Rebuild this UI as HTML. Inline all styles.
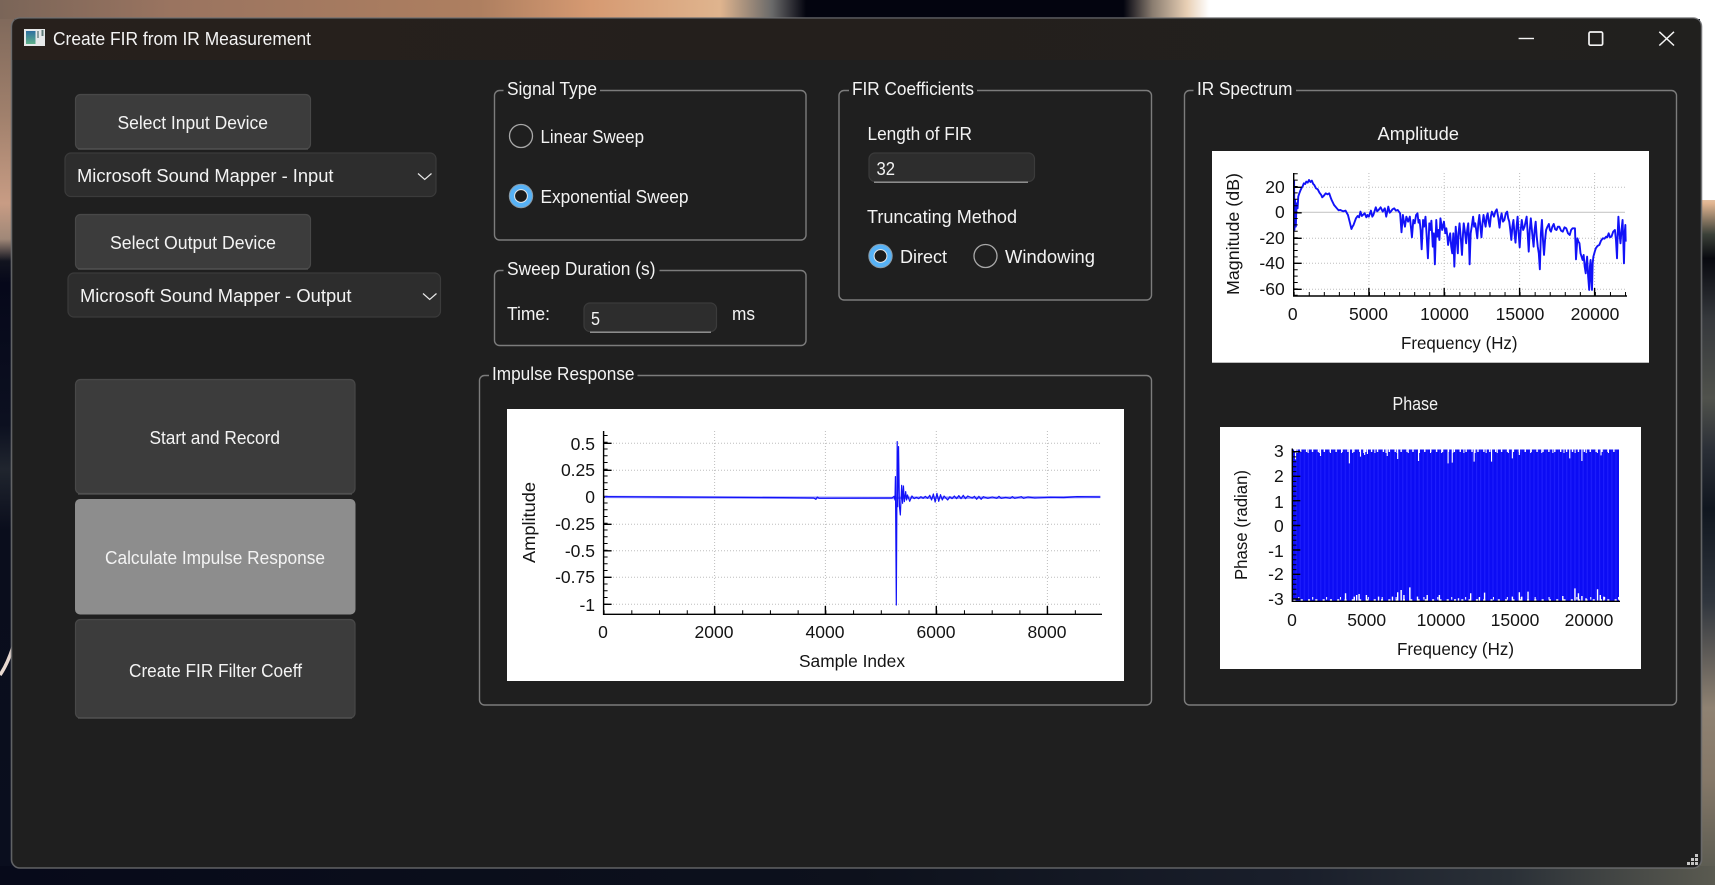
<!DOCTYPE html>
<html lang="en">
<head>
<meta charset="utf-8">
<title>Create FIR from IR Measurement</title>
<style>
html,body{margin:0;padding:0;background:#000;width:1715px;height:885px;overflow:hidden}
svg{display:block}
text{font-family:"Liberation Sans",sans-serif;font-size:18px;fill:#f3f3f3}
.k text,text.k{fill:#141414;font-size:17.5px}
.e text{text-anchor:end}
.m text{text-anchor:middle}
.btn{fill:#3c3c3c;stroke:#484848;stroke-width:1.2}
.cmb{fill:#2d2d2d;stroke:#3b3b3b;stroke-width:1.2}
.grp{fill:none;stroke:#7c7c7c;stroke-width:1.4}
.gap{fill:#1f1f1f}
.grid{stroke:#bdbdbd;stroke-width:1;stroke-dasharray:1 2;fill:none}
.ax{stroke:#000;stroke-width:1.4;fill:none}
.blue{fill:none;stroke:#1212f8;stroke-linejoin:round;vector-effect:non-scaling-stroke}
</style>
</head>
<body>
<svg xmlns="http://www.w3.org/2000/svg" width="1715" height="885" viewBox="0 0 1715 885">
<defs>
<linearGradient id="gt" x1="0" x2="1" y1="0" y2="0">
<stop offset="0" stop-color="#7a6558"/><stop offset=".1" stop-color="#9a7460"/><stop offset=".28" stop-color="#ae7f60"/><stop offset=".345" stop-color="#d69a72"/><stop offset=".42" stop-color="#dfb48e"/><stop offset=".45" stop-color="#6a6a6a"/><stop offset=".47" stop-color="#03040f"/><stop offset=".655" stop-color="#03040f"/><stop offset=".672" stop-color="#8a7d70"/><stop offset=".692" stop-color="#e8cfb4"/><stop offset=".705" stop-color="#ffffff"/><stop offset="1" stop-color="#ffffff"/>
</linearGradient>
<linearGradient id="gl" x1="0" x2="0" y1="0" y2="1">
<stop offset="0" stop-color="#7a6558"/><stop offset=".13" stop-color="#a0806c"/><stop offset=".23" stop-color="#c89c84"/><stop offset=".27" stop-color="#a08878"/><stop offset=".295" stop-color="#12141f"/><stop offset=".32" stop-color="#06081a"/><stop offset=".48" stop-color="#0c1020"/><stop offset=".53" stop-color="#20252e"/><stop offset=".6" stop-color="#0a0d1c"/><stop offset="1" stop-color="#0a0e1e"/>
</linearGradient>
<linearGradient id="gr" x1="0" x2="0" y1="0" y2="1">
<stop offset="0" stop-color="#ffffff"/><stop offset=".2" stop-color="#ffffff"/><stop offset=".23" stop-color="#e0b490"/><stop offset=".265" stop-color="#3a4038"/><stop offset=".292" stop-color="#08090f"/><stop offset=".36" stop-color="#35383c"/><stop offset=".45" stop-color="#50524c"/><stop offset=".51" stop-color="#2a2e36"/><stop offset=".575" stop-color="#10161f"/><stop offset=".68" stop-color="#30363e"/><stop offset=".8" stop-color="#8f8272"/><stop offset=".88" stop-color="#857868"/><stop offset="1" stop-color="#55574e"/>
</linearGradient>
<linearGradient id="gb" x1="0" x2="1" y1="0" y2="0">
<stop offset="0" stop-color="#070a1a"/><stop offset=".5" stop-color="#0d111c"/><stop offset=".76" stop-color="#1a1f2b"/><stop offset=".88" stop-color="#2a3037"/><stop offset="1" stop-color="#5a5a50"/>
</linearGradient>
<linearGradient id="gtb" x1="0" x2="1" y1="0" y2="0">
<stop offset="0" stop-color="#27201c"/><stop offset=".45" stop-color="#241f1c"/><stop offset="1" stop-color="#21201e"/>
</linearGradient>
<linearGradient id="gic" x1="0" x2="0" y1="0" y2="1">
<stop offset="0" stop-color="#2f6fa0"/><stop offset="1" stop-color="#5fb08a"/>
</linearGradient>
<pattern id="ps" width="4.1" height="10" patternUnits="userSpaceOnUse">
<rect width="4.1" height="10" fill="#0c0cf4"/><rect x="0" width="1.1" height="10" fill="#1e1efc"/>
</pattern>
</defs>

<!-- wallpaper -->
<rect x="0" y="0" width="1715" height="885" fill="#0a0e1e"/>
<rect x="0" y="0" width="14" height="885" fill="url(#gl)"/>
<rect x="1700" y="0" width="15" height="885" fill="url(#gr)"/>
<rect x="0" y="866" width="1715" height="19" fill="url(#gb)"/>
<rect x="0" y="0" width="1715" height="19" fill="url(#gt)"/>
<rect x="1700" y="0" width="15" height="200" fill="#fff"/>
<path d="M0 675 Q7 665 13 647" stroke="#e8d8d0" stroke-width="3.5" fill="none"/>

<!-- window -->
<rect x="11.5" y="18" width="1690" height="850" rx="8.5" fill="#1f1f1f" stroke="#6e7072" stroke-width="1.6" stroke-opacity=".85"/>
<path d="M12.3 60 V27 Q12.3 18.8 20.5 18.8 H1692.5 Q1700.7 18.8 1700.7 27 V60 Z" fill="url(#gtb)"/>

<!-- title bar -->
<rect x="24" y="29" width="21" height="17" fill="#e6e9ea"/>
<rect x="26" y="31" width="9.5" height="13" fill="url(#gic)"/>
<rect x="37" y="31" width="2" height="7" fill="#8ea0a0"/>
<rect x="41.5" y="30" width="2" height="6" fill="#5f7a78"/>
<text x="53" y="45" textLength="258" lengthAdjust="spacingAndGlyphs">Create FIR from IR Measurement</text>
<path d="M1518.6 38.5 H1534" stroke="#f4f4f4" stroke-width="1.4"/>
<rect x="1589" y="32" width="13.6" height="13.2" rx="1.5" fill="none" stroke="#f4f4f4" stroke-width="1.7"/>
<path d="M1659.3 31.8 L1674 45.5 M1674 31.8 L1659.3 45.5" stroke="#f4f4f4" stroke-width="1.5" fill="none"/>

<!-- left column -->
<rect class="btn" x="75.5" y="94.5" width="235" height="54.5" rx="5"/>
<path d="M78 149 H308" stroke="#555" stroke-width="1.2"/>
<text x="117.5" y="129" textLength="150.5" lengthAdjust="spacingAndGlyphs">Select Input Device</text>
<rect class="cmb" x="65" y="153" width="371" height="43.5" rx="6"/>
<text x="77" y="182" textLength="256.5" lengthAdjust="spacingAndGlyphs">Microsoft Sound Mapper - Input</text>
<path d="M418 173.5 L424.7 179.5 L431.5 173.5" stroke="#e8e8e8" stroke-width="1.2" fill="none"/>

<rect class="btn" x="75.5" y="214.5" width="235" height="54.5" rx="5"/>
<path d="M78 269 H308" stroke="#555" stroke-width="1.2"/>
<text x="110" y="249" textLength="166" lengthAdjust="spacingAndGlyphs">Select Output Device</text>
<rect class="cmb" x="68" y="273" width="372.5" height="44" rx="6"/>
<text x="80" y="302" textLength="271.5" lengthAdjust="spacingAndGlyphs">Microsoft Sound Mapper - Output</text>
<path d="M423 293.5 L429.7 299.5 L436.5 293.5" stroke="#e8e8e8" stroke-width="1.2" fill="none"/>

<rect class="btn" x="75.5" y="379.5" width="279.5" height="114" rx="5"/>
<path d="M78 494 H352" stroke="#555" stroke-width="1.2"/>
<text x="149.5" y="444" textLength="130.5" lengthAdjust="spacingAndGlyphs">Start and Record</text>
<rect x="75" y="499" width="280.5" height="115.5" rx="5" fill="#8d8d8d"/>
<text x="105" y="564" textLength="220" lengthAdjust="spacingAndGlyphs">Calculate Impulse Response</text>
<rect class="btn" x="75.5" y="619.5" width="279.5" height="98.5" rx="5"/>
<path d="M78 718 H352" stroke="#555" stroke-width="1.2"/>
<text x="129" y="677" textLength="173" lengthAdjust="spacingAndGlyphs">Create FIR Filter Coeff</text>

<!-- Signal Type -->
<rect class="grp" x="494.5" y="90.5" width="311.5" height="149.5" rx="5"/>
<rect class="gap" x="503.5" y="84" width="96.5" height="12"/>
<text x="507" y="95" textLength="90" lengthAdjust="spacingAndGlyphs">Signal Type</text>
<circle cx="521" cy="136" r="11.5" fill="#1f1f1f" stroke="#a8a8a8" stroke-width="1.3"/>
<text x="540.5" y="143" textLength="103.5" lengthAdjust="spacingAndGlyphs">Linear Sweep</text>
<circle cx="521" cy="196" r="11.7" fill="#57b2f6" stroke="#8a9aa6" stroke-width="1"/>
<circle cx="521" cy="196" r="6.4" fill="#1c1c1c" stroke="#e8e8e8" stroke-width="1"/>
<text x="540.5" y="203" textLength="148" lengthAdjust="spacingAndGlyphs">Exponential Sweep</text>

<!-- Sweep Duration -->
<rect class="grp" x="494.5" y="270.5" width="311.5" height="75" rx="5"/>
<rect class="gap" x="503.5" y="264" width="156" height="12"/>
<text x="507" y="275" textLength="148.5" lengthAdjust="spacingAndGlyphs">Sweep Duration (s)</text>
<text x="507" y="320" textLength="43" lengthAdjust="spacingAndGlyphs">Time:</text>
<rect class="cmb" x="584" y="303" width="132.5" height="28.5" rx="6"/>
<path d="M590 332.3 H711" stroke="#8c8c8c" stroke-width="1.5"/>
<text x="591" y="325" textLength="9" lengthAdjust="spacingAndGlyphs">5</text>
<text x="732" y="320" textLength="23" lengthAdjust="spacingAndGlyphs">ms</text>

<!-- FIR Coefficients -->
<rect class="grp" x="839" y="90.5" width="312.5" height="209.5" rx="5"/>
<rect class="gap" x="849" y="84" width="128" height="12"/>
<text x="852" y="95" textLength="122" lengthAdjust="spacingAndGlyphs">FIR Coefficients</text>
<text x="867.5" y="140" textLength="104.5" lengthAdjust="spacingAndGlyphs">Length of FIR</text>
<rect class="cmb" x="869" y="153" width="165.5" height="28.5" rx="6"/>
<path d="M874 182.3 H1028" stroke="#8c8c8c" stroke-width="1.5"/>
<text x="876.5" y="175" textLength="18.5" lengthAdjust="spacingAndGlyphs">32</text>
<text x="867" y="223" textLength="150" lengthAdjust="spacingAndGlyphs">Truncating Method</text>
<circle cx="880.5" cy="256" r="11.7" fill="#57b2f6" stroke="#8a9aa6" stroke-width="1"/>
<circle cx="880.5" cy="256" r="6.4" fill="#1c1c1c" stroke="#e8e8e8" stroke-width="1"/>
<text x="900" y="263" textLength="47" lengthAdjust="spacingAndGlyphs">Direct</text>
<circle cx="985.5" cy="256" r="11.5" fill="#1f1f1f" stroke="#a8a8a8" stroke-width="1.3"/>
<text x="1005" y="263" textLength="90" lengthAdjust="spacingAndGlyphs">Windowing</text>

<!-- Impulse Response -->
<rect class="grp" x="479.5" y="375.5" width="672" height="329.5" rx="5"/>
<rect class="gap" x="489" y="369" width="148.5" height="12"/>
<text x="492" y="380" textLength="142.5" lengthAdjust="spacingAndGlyphs">Impulse Response</text>
<rect x="507" y="409" width="617" height="272" fill="#fff"/>
<path class="grid" d="M604 443.3H1100M604 470.3H1100M604 524.3H1100M604 550.8H1100M604 577.3H1100M604 604.3H1100M714.6 431V614M825.4 431V614M936.3 431V614M1047.4 431V614"/>
<line x1="605.6" y1="604.8" x2="605.6" y2="431" stroke="#000" stroke-width="4" stroke-dasharray="1 5.75"/>
<line x1="603.6" y1="612.3" x2="1102" y2="612.3" stroke="#000" stroke-width="4" stroke-dasharray="1 26.72"/>
<path class="ax" d="M603.6 431V614.3H1102"/>
<path class="ax" d="M603.6 443.3h8M603.6 470.3h8M603.6 497.3h8M603.6 524.3h8M603.6 550.8h8M603.6 577.3h8M603.6 604.3h8M714.6 614v-8M825.4 614v-8M936.3 614v-8M1047.4 614v-8"/>
<g transform="translate(470,360) scale(.4464,.3333)">
<path d="M302 411 L950 414 L1000 413 L1200 413 L1412 411" fill="none" stroke="#8a8aff" stroke-width="2.4" vector-effect="non-scaling-stroke"/>
<path class="blue" stroke-width="1.2" d="M302 410 L440 411 L700 413 L770 414 L775 418 L778 411 L782 415 L945 414 L950 409 L952 420 L953 350 L955 735 L957 245 L958 440 L960 260 L962 440 L964 465 L967 376 L969 430 L971 378 L973 425 L976 395 L978 420 L980 405 L985 424 L990 408 L995 416 L1000 412 L1005 416 L1010 410 L1015 415 L1020 409 L1025 415 L1030 406 L1034 420 L1038 402 L1042 426 L1046 400 L1050 424 L1054 404 L1058 420 L1062 408 L1070 420 L1075 410 L1080 416 L1085 408 L1090 416 L1095 407 L1100 416 L1105 406 L1110 416 L1115 408 L1125 414 L1130 409 L1135 418 L1140 409 L1145 418 L1150 410 L1160 415 L1170 411 L1180 415 L1185 409 L1190 415 L1200 412 L1210 415 L1215 410 L1220 415 L1235 410 L1240 415 L1250 411 L1265 414 L1300 412 L1330 413 L1360 410 L1412 411"/>
</g>
<g class="k e"><text x="595" y="450">0.5</text><text x="595" y="476">0.25</text><text x="595" y="503">0</text><text x="595" y="530">-0.25</text><text x="595" y="557">-0.5</text><text x="595" y="583">-0.75</text><text x="595" y="611">-1</text></g>
<g class="k m"><text x="603" y="638">0</text><text x="714" y="638">2000</text><text x="825" y="638">4000</text><text x="936" y="638">6000</text><text x="1047" y="638">8000</text></g>
<text class="k" x="799" y="667" textLength="106" lengthAdjust="spacingAndGlyphs">Sample Index</text>
<text class="k" transform="translate(535,563) rotate(-90)" textLength="81" lengthAdjust="spacingAndGlyphs">Amplitude</text>

<!-- IR Spectrum -->
<rect class="grp" x="1184.5" y="90.5" width="492" height="614.5" rx="5"/>
<rect class="gap" x="1193.5" y="84" width="102.5" height="12"/>
<text x="1197" y="95" textLength="95.5" lengthAdjust="spacingAndGlyphs">IR Spectrum</text>
<text x="1377.5" y="140" textLength="81.5" lengthAdjust="spacingAndGlyphs">Amplitude</text>
<rect x="1212" y="151" width="437" height="211.7" fill="#fff"/>
<path class="grid" d="M1294 187.3H1625M1294 238.3H1625M1294 263.3H1625M1294 289.3H1625M1368.9 173V296M1444.2 173V296M1519.6 173V296M1594.6 173V296"/>
<path d="M1294 212.3H1625" stroke="#c8c8c8" stroke-width="1.2"/>
<g transform="translate(1170,0) scale(.3476,.3333)">
<path class="blue" stroke-width="1.9" d="M357 540 L358 690 L360 600 L362 680 L364 610 L367 625 L369 590 L372 580 L375 572 L378 565 L382 558 L385 550 L389 552 L392 545 L396 548 L400 540 L404 546 L408 542 L412 552 L415 555 L420 565 L425 568 L430 578 L435 585 L438 592 L442 588 L448 580 L453 583 L458 580 L462 592 L465 600 L472 615 L480 625 L485 631 L490 630 L498 634 L505 632 L512 645 L518 670 L522 687 L525 680 L528 675 L535 655 L540 648 L544 652 L548 635 L552 648 L555 645 L560 640 L565 652 L568 645 L572 650 L578 632 L582 650 L585 645 L592 622 L596 634 L600 630 L606 622 L612 635 L618 625 L622 650 L628 620 L632 638 L635 635 L640 628 L645 625 L650 632 L655 630 L662 640 L666 697 L670 645 L673 665 L676 680 L680 650 L685 665 L690 650 L693 680 L696 712 L700 660 L704 670 L708 645 L712 640 L715 668 L718 660 L721 690 L724 748 L728 660 L731 680 L735 650 L738 700 L742 775 L746 670 L749 690 L752 662 L756 740 L759 700 L762 793 L766 660 L769 710 L772 690 L775 720 L778 655 L783 690 L788 665 L792 700 L795 685 L798 710 L800 735 L803 715 L806 700 L809 740 L812 760 L815 700 L818 800 L822 680 L825 720 L828 760 L830 700 L833 670 L837 720 L840 765 L843 700 L845 670 L849 700 L852 730 L855 690 L858 670 L860 720 L862 793 L865 700 L868 680 L872 650 L875 680 L878 670 L881 690 L884 715 L887 670 L890 645 L893 680 L896 712 L899 670 L902 645 L905 665 L908 680 L911 650 L914 640 L917 665 L920 680 L923 650 L926 635 L932 650 L936 635 L940 628 L944 650 L948 683 L951 655 L954 640 L958 665 L962 660 L966 640 L970 635 L973 655 L976 665 L979 690 L982 720 L985 680 L988 660 L991 700 L994 728 L997 680 L1000 650 L1003 700 L1006 742 L1009 690 L1012 660 L1016 690 L1020 680 L1023 665 L1026 650 L1029 700 L1032 755 L1035 690 L1038 655 L1042 700 L1046 740 L1049 690 L1052 665 L1055 710 L1058 740 L1061 760 L1064 808 L1067 700 L1070 660 L1073 720 L1076 765 L1079 720 L1082 690 L1086 680 L1090 672 L1093 690 L1096 695 L1100 680 L1104 672 L1108 688 L1112 690 L1116 680 L1120 680 L1125 692 L1130 695 L1135 682 L1140 685 L1145 700 L1150 705 L1154 690 L1158 685 L1165 685 L1168 778 L1172 715 L1175 725 L1178 730 L1181 760 L1184 770 L1187 780 L1190 765 L1193 800 L1196 820 L1198 790 L1200 770 L1203 830 L1206 870 L1208 800 L1210 780 L1212 840 L1214 870 L1216 790 L1218 770 L1222 755 L1225 745 L1230 738 L1235 735 L1240 722 L1245 715 L1250 716 L1255 710 L1258 712 L1262 700 L1266 712 L1270 710 L1275 695 L1280 690 L1283 720 L1286 775 L1288 700 L1290 650 L1293 700 L1296 730 L1299 690 L1302 660 L1304 720 L1306 790 L1308 700 L1310 675 L1311 725"/>
</g>
<line x1="1295.7" y1="295.8" x2="1295.7" y2="173" stroke="#000" stroke-width="4" stroke-dasharray="1 5.4"/>
<line x1="1293.7" y1="294" x2="1627" y2="294" stroke="#000" stroke-width="4" stroke-dasharray="1 14.06"/>
<path class="ax" d="M1293.7 173V296H1627"/>
<path class="ax" d="M1293.7 187.3h8M1293.7 212.8h8M1293.7 238.3h8M1293.7 263.3h8M1293.7 289.3h8M1368.9 296v-8M1444.2 296v-8M1519.6 296v-8M1594.6 296v-8"/>
<g class="k e"><text x="1284.7" y="193">20</text><text x="1284.7" y="218">0</text><text x="1284.7" y="244">-20</text><text x="1284.7" y="269">-40</text><text x="1284.7" y="295">-60</text></g>
<g class="k m"><text x="1292.7" y="320">0</text><text x="1368.5" y="320">5000</text><text x="1444.5" y="320">10000</text><text x="1520" y="320">15000</text><text x="1595" y="320">20000</text></g>
<text class="k" x="1401" y="349" textLength="116.5" lengthAdjust="spacingAndGlyphs">Frequency (Hz)</text>
<text class="k" transform="translate(1239,295) rotate(-90)" textLength="122" lengthAdjust="spacingAndGlyphs">Magnitude (dB)</text>

<!-- Phase -->
<text x="1392.5" y="410" textLength="45.5" lengthAdjust="spacingAndGlyphs">Phase</text>
<rect x="1220" y="427" width="421" height="242" fill="#fff"/>
<rect x="1293" y="449.5" width="326" height="151.5" fill="url(#ps)"/>
<g transform="translate(1170,380) scale(.3476,.3333)" fill="none" stroke="#fff">
<path d="M357 211H1292" stroke-width="10" stroke-dasharray="4 13"/>
<path d="M364 213H1292" stroke-width="12" stroke-dasharray="3 29"/>
<path d="M355 661H1292" stroke-width="6" stroke-dasharray="6 15"/>
<path d="M369 655H1292" stroke-width="8" stroke-dasharray="3 37"/>
<path stroke-width="3.2" d="M361 205V238M433 205V228M516 205V250M548 205V230M560 205V225M568 205V222M625 205V228M655 205V237M715 205V243M800 205V250M812 205V248M875 205V245M925 205V245M985 205V235M1005 205V225M1150 205V235M1185 205V243M1240 205V226"/>
<path stroke-width="4" d="M505 664V640M530 664V650M537 664V645M544 664V642M565 664V645M600 664V650M640 664V650M655 664V637M665 664V630M673 664V645M690 664V622M712 664V650M740 664V645M775 664V645M830 664V655M865 664V640M890 664V652M905 664V638M985 664V650M1005 664V637M1012 664V650M1030 664V635M1130 664V648M1165 664V625M1175 664V640M1185 664V648M1197 664V655M1230 664V628M1238 664V645M1248 664V650"/>
</g>
<line x1="1294.3" y1="599.5" x2="1294.3" y2="449" stroke="#000" stroke-width="4" stroke-dasharray="1 3.9"/>
<path class="ax" d="M1292.3 448.5V601.3H1620"/>
<path class="ax" d="M1292.3 451.7h8M1292.3 476.3h8M1292.3 500.7h8M1292.3 525.5h8M1292.3 550h8M1292.3 574.3h8M1292.3 599h8"/>
<g class="k e"><text x="1283.7" y="457">3</text><text x="1283.7" y="482">2</text><text x="1283.7" y="508">1</text><text x="1283.7" y="532">0</text><text x="1283.7" y="557">-1</text><text x="1283.7" y="580">-2</text><text x="1283.7" y="605">-3</text></g>
<g class="k m"><text x="1292" y="626">0</text><text x="1366.7" y="626">5000</text><text x="1441" y="626">10000</text><text x="1515" y="626">15000</text><text x="1589" y="626">20000</text></g>
<text class="k" x="1397" y="655" textLength="117" lengthAdjust="spacingAndGlyphs">Frequency (Hz)</text>
<text class="k" transform="translate(1247,580) rotate(-90)" textLength="110" lengthAdjust="spacingAndGlyphs">Phase (radian)</text>

<!-- resize grip -->
<g fill="#c6c6c6">
<rect x="1695" y="854" width="3" height="3"/>
<rect x="1691" y="858" width="3" height="3"/><rect x="1695" y="858" width="3" height="3"/>
<rect x="1687" y="862" width="3" height="3"/><rect x="1691" y="862" width="3" height="3"/><rect x="1695" y="862" width="3" height="3"/>
</g>
</svg>
</body>
</html>
